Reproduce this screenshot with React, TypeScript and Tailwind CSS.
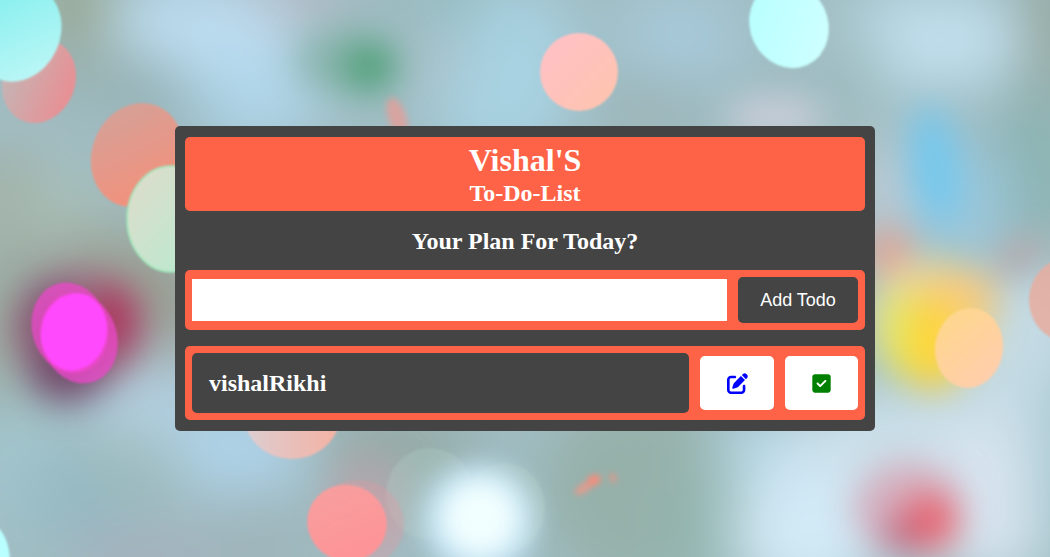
import { useState } from 'react';

type Glow = { x: number; y: number; rx: number; ry: number; fill: string; o?: number; r?: number };

const wash: Glow[] = [
  { x: 200, y: 40, rx: 100, ry: 60, fill: '#bcdcf0' },
  { x: 250, y: 100, rx: 80, ry: 40, fill: '#b0d6ea' },
  { x: 75, y: 10, rx: 32, ry: 60, fill: '#97a58d' },
  { x: 110, y: 75, rx: 80, ry: 30, fill: '#98b1b0', r: 15 },
  { x: 165, y: 100, rx: 50, ry: 16, fill: '#90aeb4', r: 20 },
  { x: 300, y: -5, rx: 50, ry: 16, fill: '#bfb6c4' },
  { x: 10, y: 190, rx: 40, ry: 60, fill: '#a2afa0' },
  { x: 40, y: 140, rx: 50, ry: 25, fill: '#a2bcc2' },
  { x: 60, y: 210, rx: 50, ry: 35, fill: '#a8beb6' },
  { x: 120, y: 265, rx: 80, ry: 35, fill: '#9ba396' },
  { x: 160, y: 310, rx: 50, ry: 60, fill: '#9a9e93' },
  { x: 5, y: 320, rx: 40, ry: 90, fill: '#9caa9e' },
  { x: 150, y: 400, rx: 60, ry: 50, fill: '#b2cddd' },
  { x: 230, y: 450, rx: 80, ry: 40, fill: '#b0d4ec' },
  { x: 15, y: 460, rx: 35, ry: 70, fill: '#a3c6ce' },
  { x: 80, y: 495, rx: 60, ry: 40, fill: '#95bac4' },
  { x: 150, y: 555, rx: 90, ry: 30, fill: '#a5b1bd' },
  { x: 140, y: 465, rx: 50, ry: 25, fill: '#9dbab8' },
  { x: 500, y: 70, rx: 80, ry: 90, fill: '#a8d2e2' },
  { x: 430, y: 60, rx: 40, ry: 30, fill: '#a8c0c8' },
  { x: 440, y: 0, rx: 60, ry: 16, fill: '#8fb7ba' },
  { x: 680, y: 40, rx: 60, ry: 50, fill: '#a7c9da' },
  { x: 650, y: 105, rx: 60, ry: 25, fill: '#9bb2b3' },
  { x: 400, y: 445, rx: 80, ry: 34, fill: '#94a9a4' },
  { x: 260, y: 545, rx: 60, ry: 40, fill: '#9fb4ba' },
  { x: 640, y: 490, rx: 100, ry: 100, fill: '#96b1aa' },
  { x: 705, y: 530, rx: 40, ry: 60, fill: '#93b5b0' },
  { x: 790, y: 450, rx: 80, ry: 34, fill: '#b6d9e8' },
  { x: 930, y: 40, rx: 100, ry: 50, fill: '#c0deec' },
  { x: 1050, y: 30, rx: 20, ry: 80, fill: '#8d9c8e' },
  { x: 856, y: 80, rx: 26, ry: 60, fill: '#9dbcbe' },
  { x: 1035, y: 170, rx: 44, ry: 80, fill: '#8bb2b0' },
  { x: 885, y: 190, rx: 26, ry: 60, fill: '#c4ced8' },
  { x: 965, y: 200, rx: 50, ry: 60, fill: '#9cc8dc' },
  { x: 940, y: 450, rx: 160, ry: 70, fill: '#cadfe9' },
  { x: 1025, y: 350, rx: 60, ry: 90, fill: '#c6dce6' },
  { x: 810, y: 530, rx: 80, ry: 70, fill: '#d2e9f6' },
  { x: 990, y: 500, rx: 70, ry: 80, fill: '#d7e4ef' },
  { x: 1058, y: 470, rx: 20, ry: 100, fill: '#a0c4cc' },
];

const halos: Glow[] = [
  { x: 350, y: 62, rx: 52, ry: 32, fill: '#7cae9f', o: 0.7 },
  { x: 370, y: 68, rx: 24, ry: 24, fill: '#4c9f76' },
  { x: 935, y: 165, rx: 24, ry: 60, fill: '#74c8ee', r: -8 },
  { x: 890, y: 255, rx: 20, ry: 28, fill: '#e8a090', r: -15 },
  { x: 1020, y: 255, rx: 30, ry: 13, fill: '#b5a0a0', r: -30 },
  { x: 775, y: 118, rx: 50, ry: 22, fill: '#c9cdd8' },
  { x: 930, y: 320, rx: 64, ry: 62, fill: '#e6dfa6', o: 0.9 },
  { x: 908, y: 335, rx: 26, ry: 46, fill: '#e2e862' },
  { x: 955, y: 300, rx: 44, ry: 32, fill: '#f6cb80' },
  { x: 934, y: 345, rx: 28, ry: 46, fill: '#ffd53c' },
  { x: 78, y: 330, rx: 66, ry: 60, fill: '#985a74', o: 0.8 },
  { x: 66, y: 372, rx: 38, ry: 32, fill: '#6a4064', o: 0.8 },
  { x: 50, y: 320, rx: 30, ry: 40, fill: '#7a4a6a', o: 0.7 },
  { x: 115, y: 318, rx: 22, ry: 34, fill: '#b02c58', o: 0.9 },
  { x: 908, y: 508, rx: 54, ry: 46, fill: '#d6a6b6', o: 0.85 },
  { x: 930, y: 522, rx: 28, ry: 28, fill: '#ea6470' },
  { x: 902, y: 536, rx: 18, ry: 14, fill: '#b4607a' },
  { x: 366, y: 500, rx: 42, ry: 50, fill: '#c09ca2', o: 0.5 },
];

const flare: Glow[] = [
  { x: 480, y: 520, rx: 56, ry: 56, fill: '#c8e8fb', o: 0.9 },
  { x: 480, y: 518, rx: 38, ry: 38, fill: '#f2ffff' },
  { x: 480, y: 518, rx: 30, ry: 30, fill: '#f2ffff' },
];

const streaks: Glow[] = [
  { x: 397, y: 117, rx: 9, ry: 20, fill: '#e0a09b', r: -18, o: 0.85 },
  { x: 584, y: 488, rx: 11, ry: 4, fill: '#e89a8c', r: -32 },
  { x: 594, y: 480, rx: 7, ry: 5, fill: '#fa8b78', r: -20 },
  { x: 613, y: 478, rx: 3, ry: 5, fill: '#e69787', r: -20 },
];

const veils: Glow[] = [
  { x: 430, y: 494, rx: 44, ry: 46, fill: '#b4d0c8', o: 0.3 },
  { x: 505, y: 508, rx: 40, ry: 45, fill: '#b9cfc0', o: 0.3 },
];

const discs: Glow[] = [
  { x: 39, y: 81, rx: 36, ry: 43, fill: 'url(#rose)', r: 22 },
  { x: 18, y: 33, rx: 42, ry: 50, fill: 'url(#aqua)', r: 25 },
  { x: 137, y: 155, rx: 45, ry: 53, fill: 'url(#coral)', r: 22 },
  { x: 579, y: 72, rx: 39, ry: 39, fill: 'url(#peach)' },
  { x: 789, y: 25, rx: 39, ry: 44, fill: 'url(#ice)', r: -25 },
  { x: 292, y: 415, rx: 48, ry: 44, fill: 'url(#blush)' },
  { x: 358, y: 524, rx: 46, ry: 44, fill: '#df9ca2', o: 0.35 },
  { x: 347, y: 523, rx: 40, ry: 38, fill: 'url(#salmon)', r: 20 },
  { x: 70, y: 328, rx: 38, ry: 46, fill: '#ee48cc', o: 0.75, r: -16 },
  { x: 79, y: 338, rx: 38, ry: 46, fill: '#ee48cc', o: 0.75, r: -18 },
  { x: 74, y: 332, rx: 33, ry: 39, fill: '#ff49fc', r: 12 },
  { x: 969, y: 348, rx: 34, ry: 40, fill: 'url(#amber)', r: 8 },
  { x: 1066, y: 300, rx: 37, ry: 41, fill: '#e7ad9f', o: 0.85 },
  { x: -8, y: 552, rx: 17, ry: 30, fill: '#b9ffff', r: -12 },
];

function Glows({ items }: { items: Glow[] }) {
  return (
    <>
      {items.map((g, i) => (
        <ellipse
          key={i}
          cx={g.x}
          cy={g.y}
          rx={g.rx}
          ry={g.ry}
          fill={g.fill}
          opacity={g.o ?? 1}
          transform={`rotate(${g.r ?? 0} ${g.x} ${g.y})`}
        />
      ))}
    </>
  );
}

function Gradient({ id, from, to, x2 = 1, y2 = 1 }: { id: string; from: string; to: string; x2?: number; y2?: number }) {
  return (
    <linearGradient id={id} x1="0" y1="0" x2={x2} y2={y2}>
      <stop stopColor={from} />
      <stop offset="1" stopColor={to} />
    </linearGradient>
  );
}

function Blur({ id, amount }: { id: string; amount: number }) {
  return (
    <filter id={id} x="-20%" y="-20%" width="140%" height="140%" colorInterpolationFilters="sRGB">
      <feGaussianBlur stdDeviation={amount} />
    </filter>
  );
}

function Bokeh() {
  return (
    <svg
      aria-hidden="true"
      className="absolute inset-0 h-full w-full"
      viewBox="0 0 1050 557"
      preserveAspectRatio="xMidYMid slice"
    >
      <defs>
        <Gradient id="rose" from="#c5b5b5" to="#e88f93" x2={1} y2={0} />
        <Gradient id="aqua" from="#7deeed" to="#c4f8f8" />
        <Gradient id="coral" from="#d0a39c" to="#fb8d75" />
        <Gradient id="peach" from="#ffc1c8" to="#ffc4ad" />
        <Gradient id="ice" from="#b5ffff" to="#d2ffff" />
        <Gradient id="mint" from="#e0dccb" to="#b5ebd0" />
        <Gradient id="blush" from="#dcced2" to="#f5b1a2" x2={1} y2={0} />
        <Gradient id="salmon" from="#f7a0a0" to="#ff9195" />
        <Gradient id="amber" from="#ffd888" to="#ffccb2" />
        <Blur id="wide" amount={28} />
        <Blur id="halo" amount={17} />
        <Blur id="flare" amount={12} />
        <Blur id="fine" amount={3} />
        <Blur id="edge" amount={0.8} />
      </defs>
      <rect x="-500" y="-500" width="2050" height="1557" fill="#a0bdc3" />
      <g filter="url(#wide)">
        <rect x="-100" y="-100" width="1250" height="757" fill="#a0bdc3" />
        <Glows items={wash} />
      </g>
      <g filter="url(#halo)">
        <Glows items={halos} />
      </g>
      <g filter="url(#edge)">
        <Glows items={veils} />
      </g>
      <g filter="url(#flare)">
        <Glows items={flare} />
      </g>
      <g filter="url(#fine)">
        <Glows items={streaks} />
      </g>
      <g filter="url(#edge)">
        <Glows items={discs} />
        <ellipse cx="171" cy="219" rx="44" ry="53" fill="url(#mint)" stroke="#9be8b8" strokeWidth="1.5" />
      </g>
    </svg>
  );
}

function EditIcon() {
  return (
    <svg aria-hidden="true" viewBox="0 0 512 512" className="h-[21px] w-[21px]" fill="currentColor">
      <path d="M471.6 21.7c-21.9-21.9-57.3-21.9-79.2 0L362.3 51.7l97.9 97.9 30.1-30.1c21.9-21.9 21.9-57.3 0-79.2L471.6 21.7zm-299.2 220c-6.1 6.1-10.8 13.6-13.5 21.9l-29.6 88.8c-2.9 8.6-.6 18.1 5.8 24.6s15.9 8.7 24.6 5.8l88.8-29.6c8.2-2.7 15.7-7.4 21.9-13.5L437.7 172.3 339.7 74.3 172.4 241.7zM96 64C43 64 0 107 0 160V416c0 53 43 96 96 96H352c53 0 96-43 96-96V320c0-17.7-14.3-32-32-32s-32 14.3-32 32v96c0 17.7-14.3 32-32 32H96c-17.7 0-32-14.3-32-32V160c0-17.7 14.3-32 32-32h96c17.7 0 32-14.3 32-32s-14.3-32-32-32H96z" />
    </svg>
  );
}

function CheckIcon() {
  return (
    <svg aria-hidden="true" viewBox="0 0 448 512" className="h-[21px] w-[19px]" fill="currentColor">
      <path d="M64 32C28.7 32 0 60.7 0 96V416c0 35.3 28.7 64 64 64H384c35.3 0 64-28.7 64-64V96c0-35.3-28.7-64-64-64H64zM337 209L209 337c-9.4 9.4-24.6 9.4-33.9 0l-64-64c-9.4-9.4-9.4-24.6 0-33.9s24.6-9.4 33.9 0l47 47L303 175c9.4-9.4 24.6-9.4 33.9 0s9.4 24.6 0 33.9z" />
    </svg>
  );
}

export default function App() {
  const [draft, setDraft] = useState('');
  const [todos, setTodos] = useState(['vishalRikhi']);

  const add = () => {
    const text = draft.trim();
    if (!text) return;
    setTodos([...todos, text]);
    setDraft('');
  };

  return (
    <main className="relative flex min-h-screen items-center justify-center overflow-hidden font-['Liberation_Serif',serif] text-white">
      <Bokeh />
      <section className="relative w-2/3 rounded-[5px] bg-[#444444] px-[10px] py-[11px]">
        <header className="rounded-[5px] bg-[#ff6347] pt-[5px] pb-1 text-center font-bold">
          <h1 className="text-[32px] leading-[37px]">Vishal'S</h1>
          <h2 className="text-2xl leading-7">To-Do-List</h2>
        </header>
        <h2 className="pt-4 pb-[15px] text-center text-2xl leading-7 font-bold">
          <label htmlFor="plan">Your Plan For Today?</label>
        </h2>
        <form
          className="flex items-center gap-[11px] rounded-[5px] bg-[#ff6347] p-[7px]"
          onSubmit={(e) => {
            e.preventDefault();
            add();
          }}
        >
          <input
            id="plan"
            type="text"
            value={draft}
            onChange={(e) => setDraft(e.target.value)}
            className="h-[42px] min-w-0 flex-1 bg-white px-3 text-lg text-black outline-none"
          />
          <button
            type="submit"
            className="h-[46px] w-[120px] rounded-[5px] bg-[#444444] font-['Liberation_Sans',sans-serif] text-lg"
          >
            Add Todo
          </button>
        </form>
        <ul className="mt-4 flex flex-col gap-4">
          {todos.map((todo, i) => (
            <li key={i} className="flex items-center gap-[11px] rounded-[5px] bg-[#ff6347] p-[7px]">
              <h2 className="min-w-0 flex-1 rounded-[5px] bg-[#444444] px-[17px] py-4 text-2xl leading-7 font-bold">
                {todo}
              </h2>
              <button
                type="button"
                aria-label="Edit"
                className="flex h-[54px] w-[74px] items-center justify-center rounded-[5px] bg-white text-[#0000ff]"
              >
                <EditIcon />
              </button>
              <button
                type="button"
                aria-label="Complete"
                onClick={() => setTodos(todos.filter((_, j) => j !== i))}
                className="flex h-[54px] w-[73px] items-center justify-center rounded-[5px] bg-white text-[#008000]"
              >
                <CheckIcon />
              </button>
            </li>
          ))}
        </ul>
      </section>
    </main>
  );
}
